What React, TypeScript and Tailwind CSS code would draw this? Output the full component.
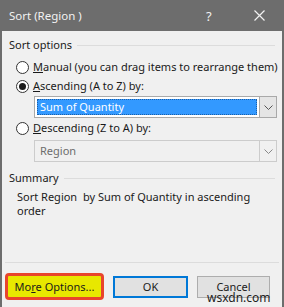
import React from "react";

const font = { fontFamily: '"Noto Sans", "Liberation Sans", sans-serif' };

function Radio({ checked }: { checked?: boolean }) {
  return (
    <span className="w-[13px] h-[13px] rounded-full border border-[#333333] bg-white flex items-center justify-center shrink-0">
      {checked && <span className="w-[7px] h-[7px] rounded-full bg-[#1a1a1a]" />}
    </span>
  );
}

function Chevron({ color }: { color: string }) {
  return (
    <svg width="9" height="5" viewBox="0 0 9 5" fill="none">
      <path d="M0.5 0.5 L4.5 4.5 L8.5 0.5" stroke={color} strokeWidth="1" />
    </svg>
  );
}

function GroupHeader({ label }: { label: string }) {
  return (
    <div className="flex items-center h-[16px] pl-[7px] pr-[7px]">
      <span className="text-[#1a1a1a]">{label}</span>
      <div className="flex-1 border-t border-[#dcdcdc] ml-[5px]" />
    </div>
  );
}

export default function App() {
  return (
    <div
      className="relative w-[284px] h-[307px] bg-[#f0f0f0] border-x-[2px] border-[#6d6d6d] flex flex-col text-[11px] leading-[16px] overflow-hidden whitespace-nowrap"
      style={font}
    >
      <div className="h-[31px] -mx-[2px] bg-[#6d6d6d] flex items-center text-[#f2f2f2] text-[11.5px]">
        <span className="pl-[9px] flex-1">Sort (Region )</span>
        <span className="w-[14px] mr-[34px] text-[13px]">?</span>
        <svg width="11" height="11" viewBox="0 0 11 11" className="mr-[19px]">
          <path d="M0.5 0.5 L10.5 10.5 M10.5 0.5 L0.5 10.5" stroke="#f2f2f2" strokeWidth="1.2" />
        </svg>
      </div>

      <div className="mt-[6px]">
        <GroupHeader label="Sort options" />
      </div>

      <div className="flex items-center h-[18px] mt-[5px] pl-[14px] gap-[4px] text-[#1a1a1a]">
        <Radio />
        <span>
          <span className="underline">M</span>anual (you can drag items to rearrange them)
        </span>
      </div>
      <div className="flex items-center h-[18px] mt-[1px] pl-[14px] gap-[4px] text-[#1a1a1a]">
        <Radio checked />
        <span>
          <span className="underline">A</span>scending (A to Z) by:
        </span>
      </div>

      <div className="ml-[32px] mr-[5px] mt-[1px] h-[22px] flex border border-[#a9a9a9] bg-white">
        <div className="flex-1 p-[2px]">
          <div className="h-full bg-[#3399ff] border border-dotted border-[#1c5fa8] text-white flex items-center pl-[2px]">
            Sum of Quantity
          </div>
        </div>
        <div className="w-[17px] bg-[#e5e5e5] border-l border-[#a9a9a9] flex items-center justify-center">
          <Chevron color="#555555" />
        </div>
      </div>

      <div className="flex items-center h-[18px] mt-[1px] pl-[14px] gap-[4px] text-[#1a1a1a]">
        <Radio />
        <span>
          <span className="underline">D</span>escending (Z to A) by:
        </span>
      </div>

      <div className="ml-[32px] mr-[5px] mt-[3px] h-[22px] flex border border-[#cccccc] bg-[#f0f0f0]">
        <div className="flex-1 flex items-center pl-[5px] text-[#6d6d6d]">Region</div>
        <div className="w-[17px] border-l border-[#cccccc] flex items-center justify-center">
          <Chevron color="#888888" />
        </div>
      </div>

      <div className="mt-[8px]">
        <GroupHeader label="Summary" />
      </div>

      <div className="mt-[4px] pl-[15px] pr-[10px] leading-[14px] text-[#1a1a1a]">
        Sort Region&nbsp; by Sum of Quantity in ascending
        <br />
        order
      </div>

      <div className="flex-1" />

      <div className="mx-[3px] border-t border-[#dcdcdc]" />

      <div className="flex items-center gap-[9px] pl-[3px] mt-[10px] mb-[7px]">
        <div className="w-[99px] h-[27px] rounded-[4px] border-[3px] border-[#e8452c] bg-[#e8e800] flex items-center justify-center text-[#1a1a1a]">
          <span>
            Mo<span className="underline">r</span>e Options...
          </span>
        </div>
        <div className="w-[75px] h-[22px] border-2 border-[#0078d7] bg-[#e1e1e1] flex items-center justify-center text-[#1a1a1a]">
          OK
        </div>
        <div className="w-[73px] h-[22px] border border-[#adadad] bg-[#e1e1e1] flex items-center justify-center text-[#1a1a1a]">
          Cancel
        </div>
      </div>

      <span className="absolute left-[205px] top-[291px] text-[12px] leading-[14px] text-[#222222]">
        wsxdn.com
      </span>
    </div>
  );
}
